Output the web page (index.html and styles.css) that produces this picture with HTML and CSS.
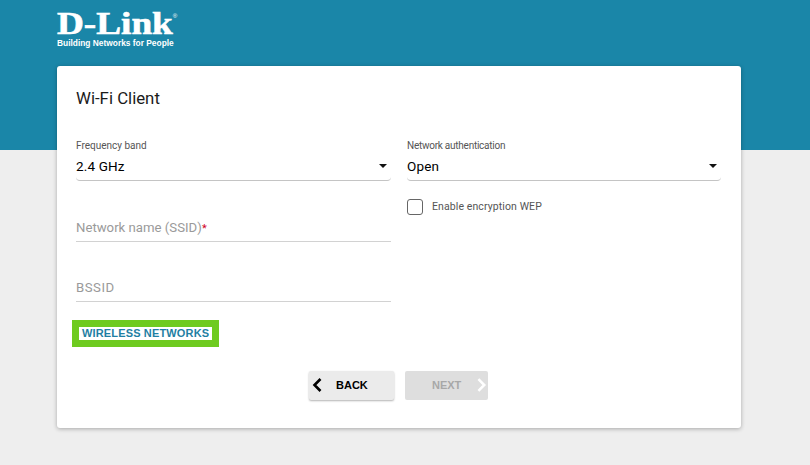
FILE: index.html
```html
<!DOCTYPE html>
<html lang="en">
<head>
<meta charset="utf-8">
<title>Wi-Fi Client</title>
<link rel="stylesheet" href="styles.css">
</head>
<body>
<header class="top">
  <div class="logo">
    <div class="logo-name">D-Link<span class="logo-reg">®</span></div>
    <div class="logo-tag">Building Networks for People</div>
  </div>
</header>
<main class="card">
  <h1 class="title">Wi-Fi Client</h1>
  <div class="columns">
    <div class="col">
      <div class="select">
        <div class="small-label">Frequency band</div>
        <div class="select-row"><span>2.4 GHz</span><span class="caret"></span></div>
      </div>
      <div class="input input-first">Network name (SSID)<span class="req">*</span></div>
      <div class="input input-wide">BSSID</div>
      <div class="link-box"><a class="link">WIRELESS NETWORKS</a></div>
    </div>
    <div class="col">
      <div class="select">
        <div class="small-label small-label-tight">Network authentication</div>
        <div class="select-row"><span>Open</span><span class="caret"></span></div>
      </div>
      <label class="check"><span class="box"></span><span class="check-text">Enable encryption WEP</span></label>
    </div>
  </div>
  <div class="actions">
    <button class="btn back" type="button">
      <svg class="chev" width="12" height="16" viewBox="0 0 12 16"><path d="M9.5 2 L3.5 8 L9.5 14" fill="none" stroke="#000" stroke-width="2.6"/></svg>
      <span>BACK</span>
    </button>
    <button class="btn next" type="button">
      <span>NEXT</span>
      <svg class="chev" width="12" height="16" viewBox="0 0 12 16"><path d="M2.5 2 L8.5 8 L2.5 14" fill="none" stroke="#fff" stroke-width="2.6"/></svg>
    </button>
  </div>
</main>
</body>
</html>
```
FILE: styles.css
```css
* { box-sizing: border-box; }
html, body { margin: 0; height: 100%; overflow: hidden; }
body { background: #eeeeee; font-family: Roboto, "Liberation Sans", sans-serif; color: #000; }
.top { height: 150px; background: #1a86a8; padding: 9px 0 0 57px; }
.logo { color: #fff; width: 120px; }
.logo-name { height: 29px; font-family: "Liberation Serif", serif; font-weight: 700; font-size: 31px; line-height: 29px; white-space: nowrap; transform: scaleX(1.2); transform-origin: left; -webkit-text-stroke: .6px #fff; }
.logo-reg { font-family: "Liberation Sans", sans-serif; font-size: 5px; line-height: 0; font-weight: 400; vertical-align: 16px; -webkit-text-stroke: 0; }
.logo-tag { font-family: "Liberation Sans", sans-serif; font-size: 9px; font-weight: 700; line-height: 10px; white-space: nowrap; transform: scaleX(.93); transform-origin: left; }
.card { width: 684px; height: 362px; margin: -84px 0 0 57px; background: #fff; border-radius: 3px; box-shadow: 0 1px 4px rgba(0,0,0,.3); padding: 23px 20px 0 19px; }
.title { margin: 0; font-size: 16.8px; font-weight: 400; line-height: 19px; color: #1a1a1a; }
.columns { display: grid; grid-template-columns: 315px 314px; gap: 16px; margin-top: 32px; }
.small-label { font-size: 10px; line-height: 12px; color: #555; }
.small-label-tight { letter-spacing: -.25px; }
.select { height: 41px; border-bottom: 1px solid #c4c4c4; border-radius: 0 0 4px 4px; }
.select-row { display: flex; justify-content: space-between; align-items: center; font-size: 13.5px; line-height: 16px; margin-top: 6px; padding-right: 4px; letter-spacing: .15px; }
.caret { width: 0; height: 0; border-left: 4px solid transparent; border-right: 4px solid transparent; border-top: 4px solid #111; }
.input { height: 30px; margin-top: 30px; padding-top: 8px; border-bottom: 1px solid #d2d2d2; font-size: 13.2px; line-height: 16px; color: #9a9a9a; }
.input-first { margin-top: 31px; }
.input-wide { letter-spacing: .5px; }
.req { color: #d0021b; font-size: 11px; }
.link-box { display: inline-block; margin: 18px 0 0 -4px; border: 7px solid #6ecb1f; background: #fff; padding: 0 3px; height: 27px; }
.link { display: block; font-size: 11px; font-weight: 700; line-height: 13px; color: #1f7fa3; font-family: "Liberation Sans", sans-serif; letter-spacing: .15px; }
.check { display: flex; align-items: center; margin-top: 18px; gap: 9px; }
.box { width: 16px; height: 16px; border: 1.5px solid #666; border-radius: 3px; }
.check-text { font-size: 10.5px; line-height: 14px; color: #555; letter-spacing: .1px; }
.actions { display: flex; justify-content: center; gap: 11px; margin-top: 24px; }
.btn { width: 85px; height: 29px; border: 0; border-radius: 2px; display: flex; align-items: center; font-family: "Liberation Sans", sans-serif; font-weight: 700; font-size: 11px; padding: 0 0 1px; }
.back { background: #ebebeb; color: #000; box-shadow: 0 1px 2px rgba(0,0,0,.3); padding-left: 2px; gap: 13px; }
.next { background: #dedede; color: #a8a8a8; width: 83px; padding-left: 27px; gap: 15px; }
```
